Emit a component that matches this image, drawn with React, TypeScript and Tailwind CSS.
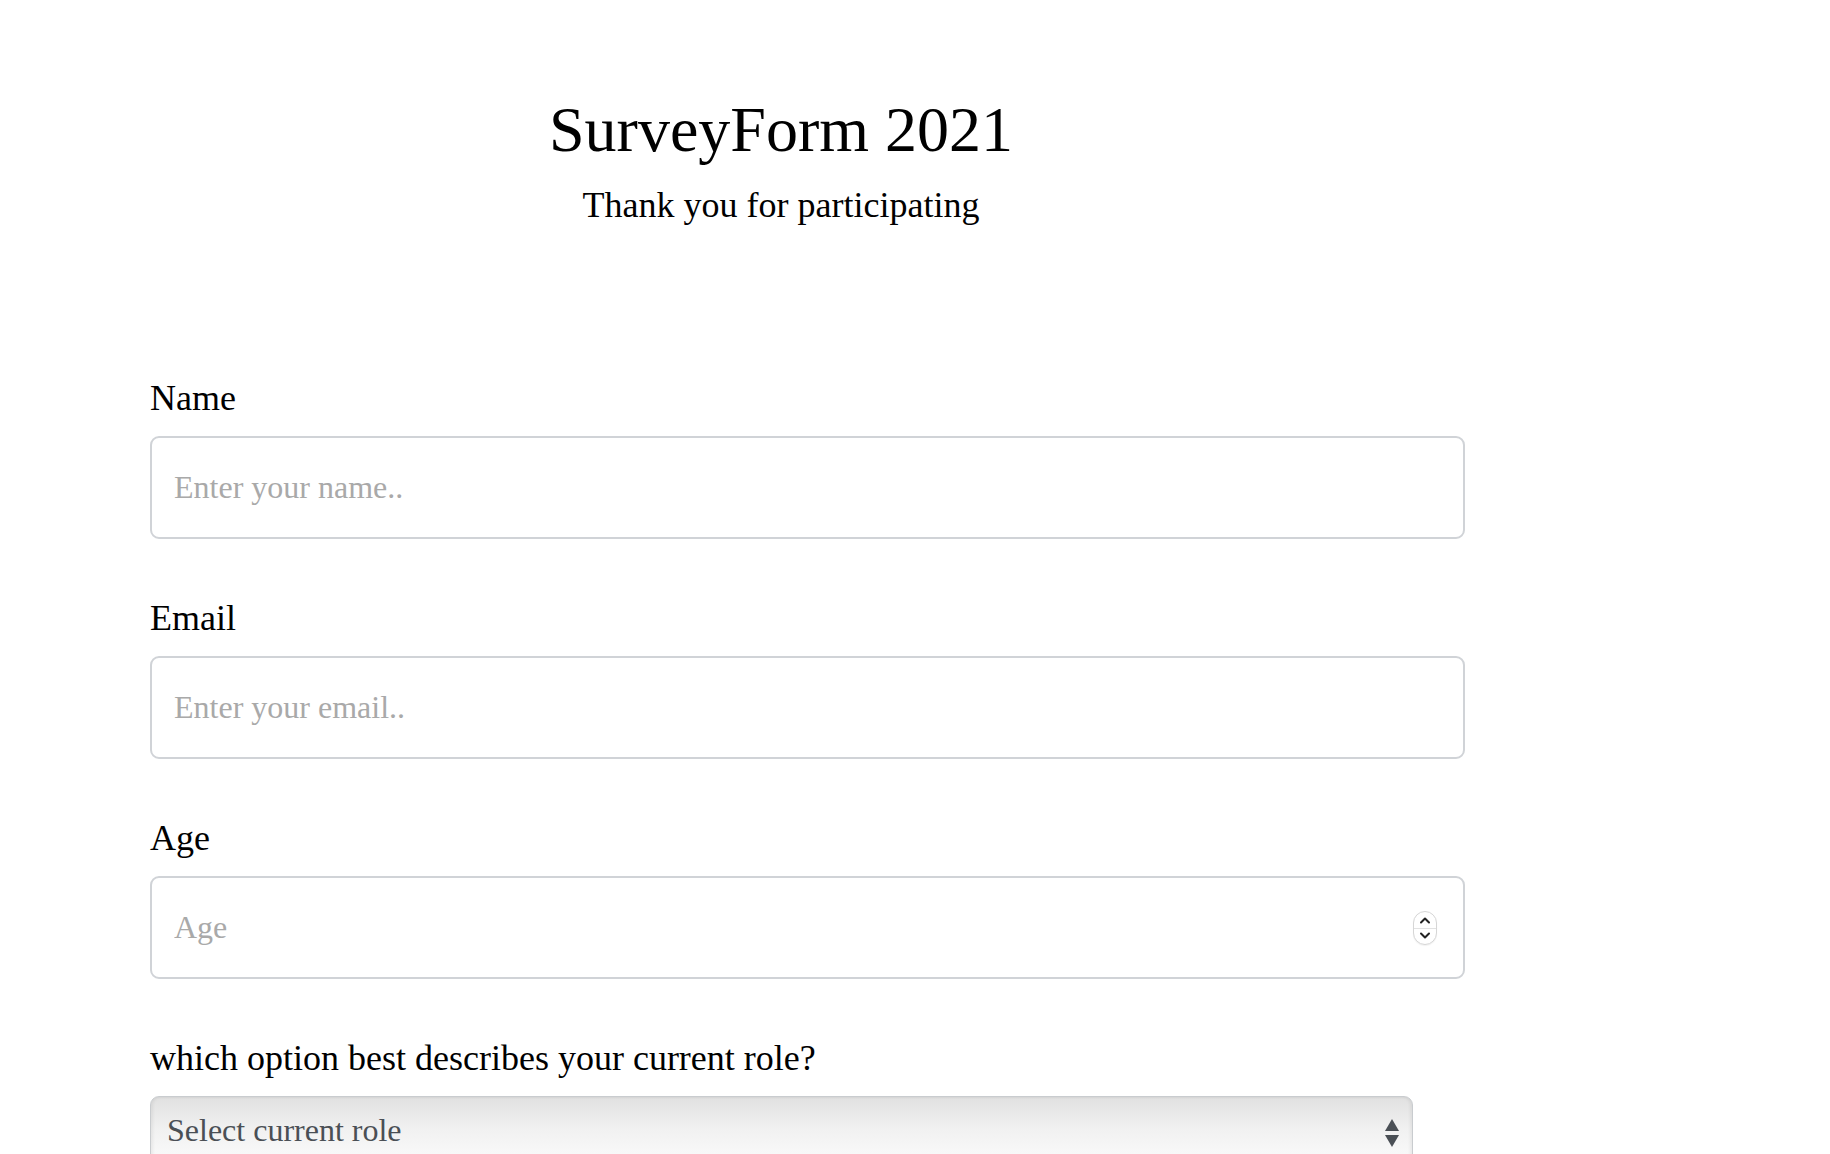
import React from "react";

const serif = { fontFamily: '"Liberation Serif", "Times New Roman", serif' };

function Field({ label, children, first }: { label: string; children: React.ReactNode; first?: boolean }) {
  return (
    <div className={first ? "" : "mt-[59px]"}>
      <label className="block text-[36px] leading-[41px] text-black mb-[17px]">{label}</label>
      {children}
    </div>
  );
}

const inputCls =
  "block w-[1315px] h-[103px] border-2 border-[#d0d3d7] rounded-[9px] px-[22px] text-[32px] text-black placeholder:text-[#a9a9a9] bg-white outline-none";

export default function App() {
  return (
    <div className="min-h-screen bg-white text-black" style={serif}>
      <header className="w-[1562px] text-center pt-[93px]">
        <h1 className="text-[64px] leading-[74px] font-normal">SurveyForm 2021</h1>
        <p className="text-[36px] leading-[41px] mt-[18px]">Thank you for participating</p>
      </header>
      <form className="pl-[150px] pt-[152px] pb-[200px]">
        <Field label="Name" first>
          <input type="text" placeholder="Enter your name.." className={inputCls} style={serif} />
        </Field>
        <Field label="Email">
          <input type="email" placeholder="Enter your email.." className={inputCls} style={serif} />
        </Field>
        <Field label="Age">
          <div className="relative w-[1315px]">
            <input type="text" inputMode="numeric" placeholder="Age" className={inputCls} style={serif} />
            <div className="absolute left-[1263px] top-[35px] w-[24px] h-[34px] rounded-[12px] border border-[#d6d6d6] bg-white flex flex-col overflow-hidden shadow-[0_1px_1px_rgba(0,0,0,0.05)]">
              <div className="flex-1 flex items-center justify-center border-b border-[#e2e2e2]">
                <svg width="12" height="8" viewBox="0 0 12 8"><path d="M2 6.5 L6 2.5 L10 6.5" fill="none" stroke="#222" strokeWidth="2" strokeLinecap="round" strokeLinejoin="round" /></svg>
              </div>
              <div className="flex-1 flex items-center justify-center">
                <svg width="12" height="8" viewBox="0 0 12 8"><path d="M2 1.5 L6 5.5 L10 1.5" fill="none" stroke="#222" strokeWidth="2" strokeLinecap="round" strokeLinejoin="round" /></svg>
              </div>
            </div>
          </div>
        </Field>
        <Field label="which option best describes your current role?">
          <div className="relative w-[1263px]">
            <select
              className="block w-full h-[68px] appearance-none rounded-[9px] border border-[#c9cccf] bg-gradient-to-b from-[#e1e1e1] via-[#f1f1f1] to-[#fbfbfb] shadow-[inset_2px_0_3px_rgba(0,0,0,0.06),inset_-2px_0_3px_rgba(0,0,0,0.06)] pl-[16px] text-[32px] text-[#4a4f55] outline-none"
              style={serif}
              defaultValue=""
            >
              <option value="" disabled>Select current role</option>
              <option>Student</option>
              <option>Full Time Job</option>
              <option>Full Time Learner</option>
              <option>Prefer not to say</option>
              <option>Other</option>
            </select>
            <svg className="absolute left-[1235px] top-[23px] pointer-events-none" width="14" height="28" viewBox="0 0 14 28">
              <path d="M7 0 L14 12 L0 12 Z" fill="#4a4f55" />
              <path d="M0 16 L14 16 L7 28 Z" fill="#4a4f55" />
            </svg>
          </div>
        </Field>
      </form>
    </div>
  );
}
